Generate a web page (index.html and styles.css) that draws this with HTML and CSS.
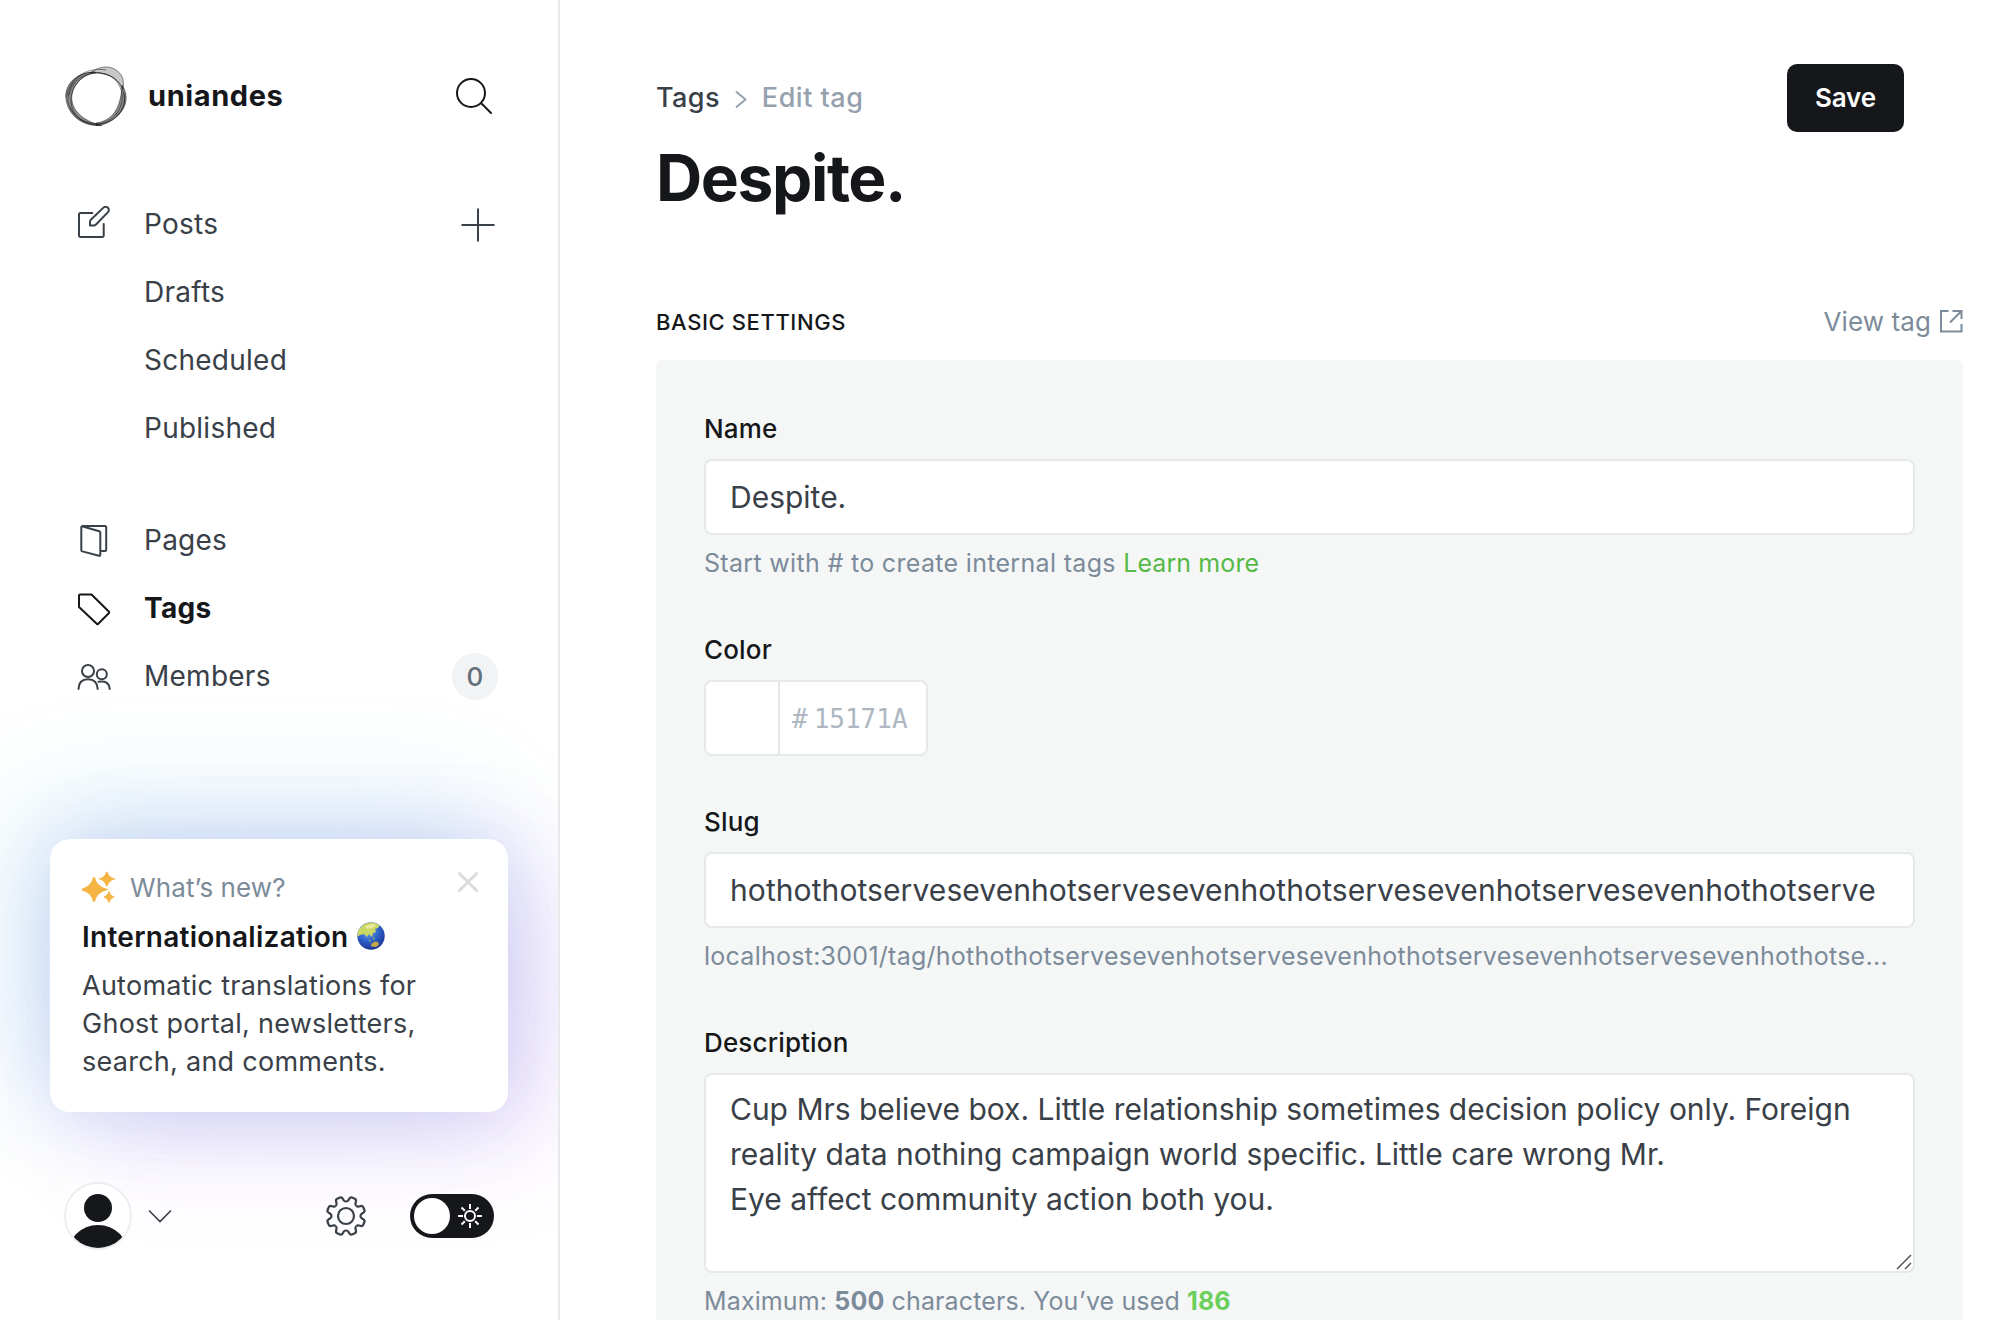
FILE: index.html
```html
<!DOCTYPE html>
<html lang="en">
<head>
<meta charset="utf-8">
<title>Edit tag</title>
<link rel="stylesheet" href="styles.css">
</head>
<body>
<div class="app">
  <aside class="sidebar">
    <header class="brand">
      <svg class="brand-logo" width="72" height="70" viewBox="0 0 72 70">
        <g fill="#000" fill-opacity=".28" stroke="#111" stroke-opacity=".6" stroke-width=".8">
          <path d="M30 12C38 6 48 3.500 56 9C62 13 64.500 18 63 28C58 18 52 15 46 13.500C40 12 35 11 30 12Z" fill-opacity=".22"/>
          <path d="M62 24C69 34 66 45 61 51C55 59 45 64.500 36 64.500L36 62C52 60 61 48 62 24Z" fill-opacity=".45"/>
          <path d="M42 64.500C22 66 8 54 6 38C4 26 14 11 35 11C20 14 10 28 12 40C14 52 26 61 42 64.500Z" fill-opacity=".45"/>
          <path d="M40 12C22 8 8 20 8 40C10 54 24 64 42 62.500C58 60 67 46 64 34C62 22 54 14 40 12Z" fill="none"/>
          <path d="M46 9C30 6 10 14 6.500 36M9 34C12 20 22 13 36 12M10 46C14 56 24 63 38 63.500M56 55C62 50 66 42 64 32" fill="none"/>
          <ellipse cx="37" cy="37.500" rx="26.500" ry="25" transform="rotate(-50 37 38)" fill="none"/>
        </g>
      </svg>
      <span class="brand-name">uniandes</span>
      <svg class="search" width="40" height="40" viewBox="0 0 40 40" fill="none" stroke="#15171a" stroke-width="2" stroke-linecap="round"><circle cx="18" cy="17" r="14"/><path d="M28.500 27.500L38 37"/></svg>
    </header>

    <nav class="nav">
      <a class="nav-item">
        <svg class="nav-icon" width="36" height="36" viewBox="0 0 36 36"><path d="M16.300 7H4.500A1.500 1.500 0 0 0 3 8.500V29.500A1.500 1.500 0 0 0 4.500 31H26.200A1.500 1.500 0 0 0 27.700 29.500V18"/><path d="M14 19.600V16Q14 14.500 15 13.500L27.200 1.900A3 3 0 0 1 32 6.100L20 18.500Q19 19.600 17.500 19.600Z"/></svg>
        <span>Posts</span>
        <svg class="nav-plus" width="34" height="34" viewBox="0 0 34 34"><path d="M17 .500V33.500M.500 17H33.500"/></svg>
      </a>
      <a class="nav-item nav-sub"><span>Drafts</span></a>
      <a class="nav-item nav-sub"><span>Scheduled</span></a>
      <a class="nav-item nav-sub"><span>Published</span></a>
    </nav>
    <nav class="nav nav-second">
      <a class="nav-item">
        <svg class="nav-icon" width="36" height="36" viewBox="0 0 36 36"><path d="M24.500 29H29A1.200 1.200 0 0 0 30.200 27.800V5.200A1.200 1.200 0 0 0 29 4H6.500A1.200 1.200 0 0 0 5.300 5.200V28Q5.300 29 6.300 29.400L23 33.800Q24.300 34 24.300 33V10.600Q24.300 9.600 23.300 9.200L6 4.200"/></svg>
        <span>Pages</span>
      </a>
      <a class="nav-item is-active">
        <svg class="nav-icon" width="36" height="36" viewBox="0 0 36 36"><path d="M4 4.500H15.500L33 21.800Q33.500 22.400 33 23L22 34Q21.500 34.500 21 34L3 17V5.500Q3 4.500 4 4.500Z"/></svg>
        <span>Tags</span>
      </a>
      <a class="nav-item">
        <svg class="nav-icon" width="36" height="36" viewBox="0 0 36 36"><circle cx="12" cy="13" r="6"/><path d="M2.500 31Q2.800 21.300 12 21.300T21.700 31"/><circle cx="25.800" cy="16.300" r="5"/><path d="M22.500 23.700Q32.800 22 33.700 31"/></svg>
        <span>Members</span>
        <span class="count">0</span>
      </a>
    </nav>

    <section class="news">
      <div class="news-head">
        <svg width="34" height="34" viewBox="0 0 34 34" fill="#f5b544" stroke="#f5b544"><path d="M12 7.500Q13.500 16.500 23.500 19.500Q13.500 22.500 12 31.500Q10.500 22.500 .500 19.500Q10.500 16.500 12 7.500Z" stroke-width="2"/><path d="M24.800 2Q25.800 7.300 31.500 9Q25.800 10.700 24.800 16Q23.800 10.700 18.500 9Q23.800 7.300 24.800 2Z" stroke-width="1.500"/><path d="M27 21.500Q27.800 25.800 32 27Q27.800 28.200 27 32.500Q26.200 28.200 22 27Q26.200 25.800 27 21.500Z"/></svg>
        <span>What’s new?</span>
        <svg class="news-close" width="20" height="20" viewBox="0 0 20 20"><path d="M1.500 1.500L18.500 18.500M18.500 1.500L1.500 18.500"/></svg>
      </div>
      <h2 class="news-title"><span>Internationalization</span>
        <svg width="28" height="28" viewBox="0 0 28 28">
          <defs><radialGradient id="sea" cx=".4" cy=".3" r=".75"><stop offset="0" stop-color="#7fa5e8"/><stop offset=".5" stop-color="#2f62cc"/><stop offset="1" stop-color="#1a318f"/></radialGradient><clipPath id="globe"><circle cx="14" cy="14" r="13.700"/></clipPath></defs>
          <g clip-path="url(#globe)"><rect width="28" height="28" fill="url(#sea)"/><path d="M1 8L7 2L15 0L23 3L21 6L18 7L19 10L16 11L15 15L12 12L10 15L7 12L3 13L0 15Z" fill="#cbd763"/><path d="M8 4L16 2L19 4L15 6L10 7Z" fill="#e8e99b"/><path d="M11 17L14 19L13 20ZM16 15L18 17L16 18Z" fill="#8fbf62"/><path d="M14 22L18 19.500L21 20L22 22.500L19 25L14.500 24.500Z" fill="#c3a748"/></g>
        </svg>
      </h2>
      <p class="news-body">Automatic translations for Ghost portal, newsletters, search, and comments.</p>
    </section>

    <footer class="foot">
      <svg width="68" height="68" viewBox="0 0 68 68"><clipPath id="av"><circle cx="34" cy="34" r="32"/></clipPath><circle cx="34" cy="34" r="33" fill="#fff" stroke="#eceef0" stroke-width="2"/><g fill="#15171a" clip-path="url(#av)"><circle cx="34" cy="26" r="14"/><circle cx="34" cy="74" r="31"/></g></svg>
      <svg class="chevron" width="24" height="14" viewBox="0 0 24 14"><path d="M1 1.500L12 12.500L23 1.500"/></svg>
      <svg class="gear" width="42" height="42" viewBox="-21 -21 42 42">
        <defs><path id="tooth" d="M-5.550 -13.400Q-4 -14 -3.800 -15.800L-3.600 -17.300Q-3.200 -19.300 -1.500 -19.300H1.500Q3.200 -19.300 3.600 -17.300L3.800 -15.800Q4 -14 5.550 -13.400"/></defs>
        <circle r="8"/>
        <use href="#tooth" transform="rotate(22.500)"/><use href="#tooth" transform="rotate(67.500)"/><use href="#tooth" transform="rotate(112.500)"/><use href="#tooth" transform="rotate(157.500)"/><use href="#tooth" transform="rotate(202.500)"/><use href="#tooth" transform="rotate(247.500)"/><use href="#tooth" transform="rotate(292.500)"/><use href="#tooth" transform="rotate(337.500)"/>
      </svg>
      <span class="toggle"><i class="knob"></i>
        <svg width="24" height="24" viewBox="-12 -12 24 24"><circle r="5"/><path d="M0 -12V-7M0 12V7M-12 0H-7M12 0H7M-8.500 -8.500L-5.200 -5.200M8.500 8.500L5.200 5.200M-8.500 8.500L-5.200 5.200M8.500 -8.500L5.200 -5.200"/></svg>
      </span>
    </footer>
  </aside>

  <main class="main">
    <header class="top">
      <div>
        <div class="crumbs"><span>Tags</span><svg width="12" height="19" viewBox="0 0 12 19"><path d="M1 1.500L10.500 9.500L1 17.500"/></svg><span class="crumb-current">Edit tag</span></div>
        <h1 class="title">Despite.</h1>
      </div>
      <button class="save"><span>Save</span></button>
    </header>

    <div class="section-head">
      <h4 class="section-title">BASIC SETTINGS</h4>
      <a class="view"><span>View tag</span><svg width="24" height="24" viewBox="0 0 24 24"><path d="M9.500 2H2V22.500H22.500V15M13.500 2H22.500V10M22 2.500L11 13.500"/></svg></a>
    </div>

    <div class="panel">
      <div class="label">Name</div>
      <div class="input">Despite.</div>
      <p class="hint hint-name">Start with # to create internal tags <a class="link">Learn more</a></p>

      <div class="label">Color</div>
      <div class="color"><i class="swatch"></i><span class="hash">#</span><span class="hex">15171A</span></div>

      <div class="label">Slug</div>
      <div class="input slug">hothothotservesevenhotservesevenhothotservesevenhotservesevenhothotserve</div>
      <p class="hint">localhost:3001/tag/hothothotservesevenhotservesevenhothotservesevenhotservesevenhothotse...</p>

      <div class="label">Description</div>
      <div class="textarea">Cup Mrs believe box. Little relationship sometimes decision policy only. Foreign<br>reality data nothing campaign world specific. Little care wrong Mr.<br>Eye affect community action both you.
        <svg class="grip" width="18" height="18" viewBox="0 0 18 18"><path d="M2 16L16 2M10 16L16 10"/></svg>
      </div>
      <p class="hint hint-count">Maximum: <b>500</b> characters. You’ve used <b class="ok">186</b></p>
    </div>
  </main>
</div>
</body>
</html>
```
FILE: styles.css
```css
* { box-sizing: border-box; }
body { margin: 0; background: #fff; font-family: Inter, "Liberation Sans", sans-serif; color: #15171a; }
h1, h2, h4, p { margin: 0; }
svg { display: block; flex: none; }

.app { display: flex; width: 2000px; height: 1320px; overflow: hidden; }

.sidebar { display: flex; flex-direction: column; width: 560px; height: 1320px; padding: 60px 0 70px; border-right: 2px solid #e8e9eb; overflow: hidden; flex: none; }

.brand { display: flex; align-items: center; height: 72px; padding: 0 65px 0 60px; }
.brand-name { margin-left: 16px; padding-bottom: 1px; font-size: 29px; font-weight: 700; letter-spacing: .6px; }
.search { margin-left: auto; }

.nav { display: flex; flex-direction: column; margin-top: 58px; padding: 0 60px 0 76px; color: #394047; letter-spacing: .25px; }
.nav-second { margin-top: 44px; }
.nav-item { display: flex; align-items: center; height: 68px; font-size: 28px; }
.nav-icon { margin-right: 32px; fill: none; stroke: currentColor; stroke-width: 2; stroke-linecap: round; stroke-linejoin: round; }
.nav-plus { margin: 2px 3px 0 auto; stroke: currentColor; stroke-width: 2; }
.nav-sub { padding-left: 68px; }
.is-active { color: #15171a; font-weight: 700; letter-spacing: .3px; }
.count { display: flex; align-items: center; justify-content: center; width: 46px; height: 47px; margin-left: auto; border-radius: 24px; background: #f1f3f4; color: #626d79; font-size: 26px; font-weight: 500; }

.news { display: flex; flex-direction: column; width: 458px; height: 273px; margin: auto 50px 0; padding: 29px 26px 0 32px; border-radius: 20px; background: #fff;
  box-shadow: -26px -28px 120px rgba(50, 180, 215, .17), 40px 28px 110px rgba(180, 90, 240, .17), 0 0 80px rgba(70, 90, 215, .18); }
.news-head { display: flex; align-items: center; height: 38px; color: #7c8b9a; font-size: 26px; letter-spacing: .1px; }
.news-head span { margin-left: 14px; }
.news-close { margin: -11px 4px 0 auto; stroke: #d9dbdd; stroke-width: 3; stroke-linecap: round; }
.news-title { display: flex; align-items: center; gap: 8px; height: 60px; font-size: 28px; font-weight: 600; letter-spacing: .27px; }
.news-title span { padding-top: 2px; }
.news-body { width: 380px; margin-top: 1px; font-size: 27px; line-height: 38px; color: #394047; letter-spacing: .26px; }

.foot { display: flex; align-items: center; height: 68px; margin-top: 70px; padding: 0 64px; }
.chevron { margin-left: 16px; fill: none; stroke: #394047; stroke-width: 1.600; }
.gear { margin-left: auto; fill: none; stroke: #394047; stroke-width: 2.200; stroke-linejoin: round; }
.toggle { display: flex; align-items: center; width: 84px; height: 44px; margin-left: 43px; padding: 0 12px 0 4px; justify-content: space-between; border-radius: 22px; background: #15171a; }
.toggle svg { fill: none; stroke: #fff; stroke-width: 2; }
.knob { width: 36px; height: 36px; border-radius: 50%; background: #fff; }

.main { flex: 1; padding: 64px 37px 0 96px; }
.top { display: flex; justify-content: space-between; height: 226px; padding-right: 59px; }
.crumbs { display: flex; align-items: center; height: 66px; font-size: 27px; font-weight: 500; color: #394047; letter-spacing: .4px; }
.crumbs svg { margin: 4px 15px 0 15px; fill: none; stroke: #95a1ad; stroke-width: 2; }
.crumb-current { color: #95a1ad; letter-spacing: .5px; }
.title { font-size: 64px; line-height: 76px; margin-top: 10px; font-weight: 700; letter-spacing: -1.4px; }
.save { display: flex; align-items: center; justify-content: center; width: 117px; height: 68px; padding: 0 0 2px; border: 0; border-radius: 10px; background: #15171a; color: #fff; font: 600 26px Inter, sans-serif; letter-spacing: -.2px; }

.section-head { display: flex; justify-content: space-between; align-items: center; height: 62px; margin-bottom: 8px; }
.section-title { padding-top: 2px; font-size: 22px; font-weight: 500; letter-spacing: .6px; }
.view { display: flex; align-items: center; gap: 8px; color: #7c8b9a; font-size: 26px; letter-spacing: .1px; }
.view svg { fill: none; stroke: currentColor; stroke-width: 2; }

.panel { height: 1000px; padding: 51px 48px 0 48px; border-radius: 6px; background: #f4f7f6; }
.label { height: 48px; line-height: 35px; font-size: 26px; font-weight: 500; letter-spacing: .15px; }
.input { display: flex; align-items: center; height: 76px; padding: 0 24px; border: 2px solid #e6e9e9; border-radius: 8px; background: #fff; color: #394047; font-size: 30px; white-space: nowrap; }
.slug { letter-spacing: .085px; }
.hint { height: 97px; padding-top: 11px; line-height: 34px; font-size: 25px; color: #7c8b9a; letter-spacing: .26px; white-space: nowrap; }
.hint-name { letter-spacing: .32px; }
.hint-count { letter-spacing: .13px; }
.link { color: #57b947; letter-spacing: .1px; }
.color { display: flex; align-items: center; width: 224px; height: 76px; margin-bottom: 48px; border: 2px solid #e6e9e9; border-radius: 8px; background: #fff; color: #aeb7c1; font: 26px "DejaVu Sans Mono", monospace; }
.swatch { align-self: stretch; width: 74px; border-right: 2px solid #e6e9e9; }
.hash { margin: 0 6px 0 12px; padding-top: 2px; }
.hex { padding-top: 2px; }
.textarea { position: relative; height: 200px; padding: 12px 24px; border: 2px solid #e6e9e9; border-radius: 8px; background: #fff; color: #394047; font-size: 30px; line-height: 45px; letter-spacing: -.015px; white-space: nowrap; }
.grip { position: absolute; right: 0; bottom: 0; stroke: #555; stroke-width: 1.500; }
.ok { color: #6bcf5b; }
```
